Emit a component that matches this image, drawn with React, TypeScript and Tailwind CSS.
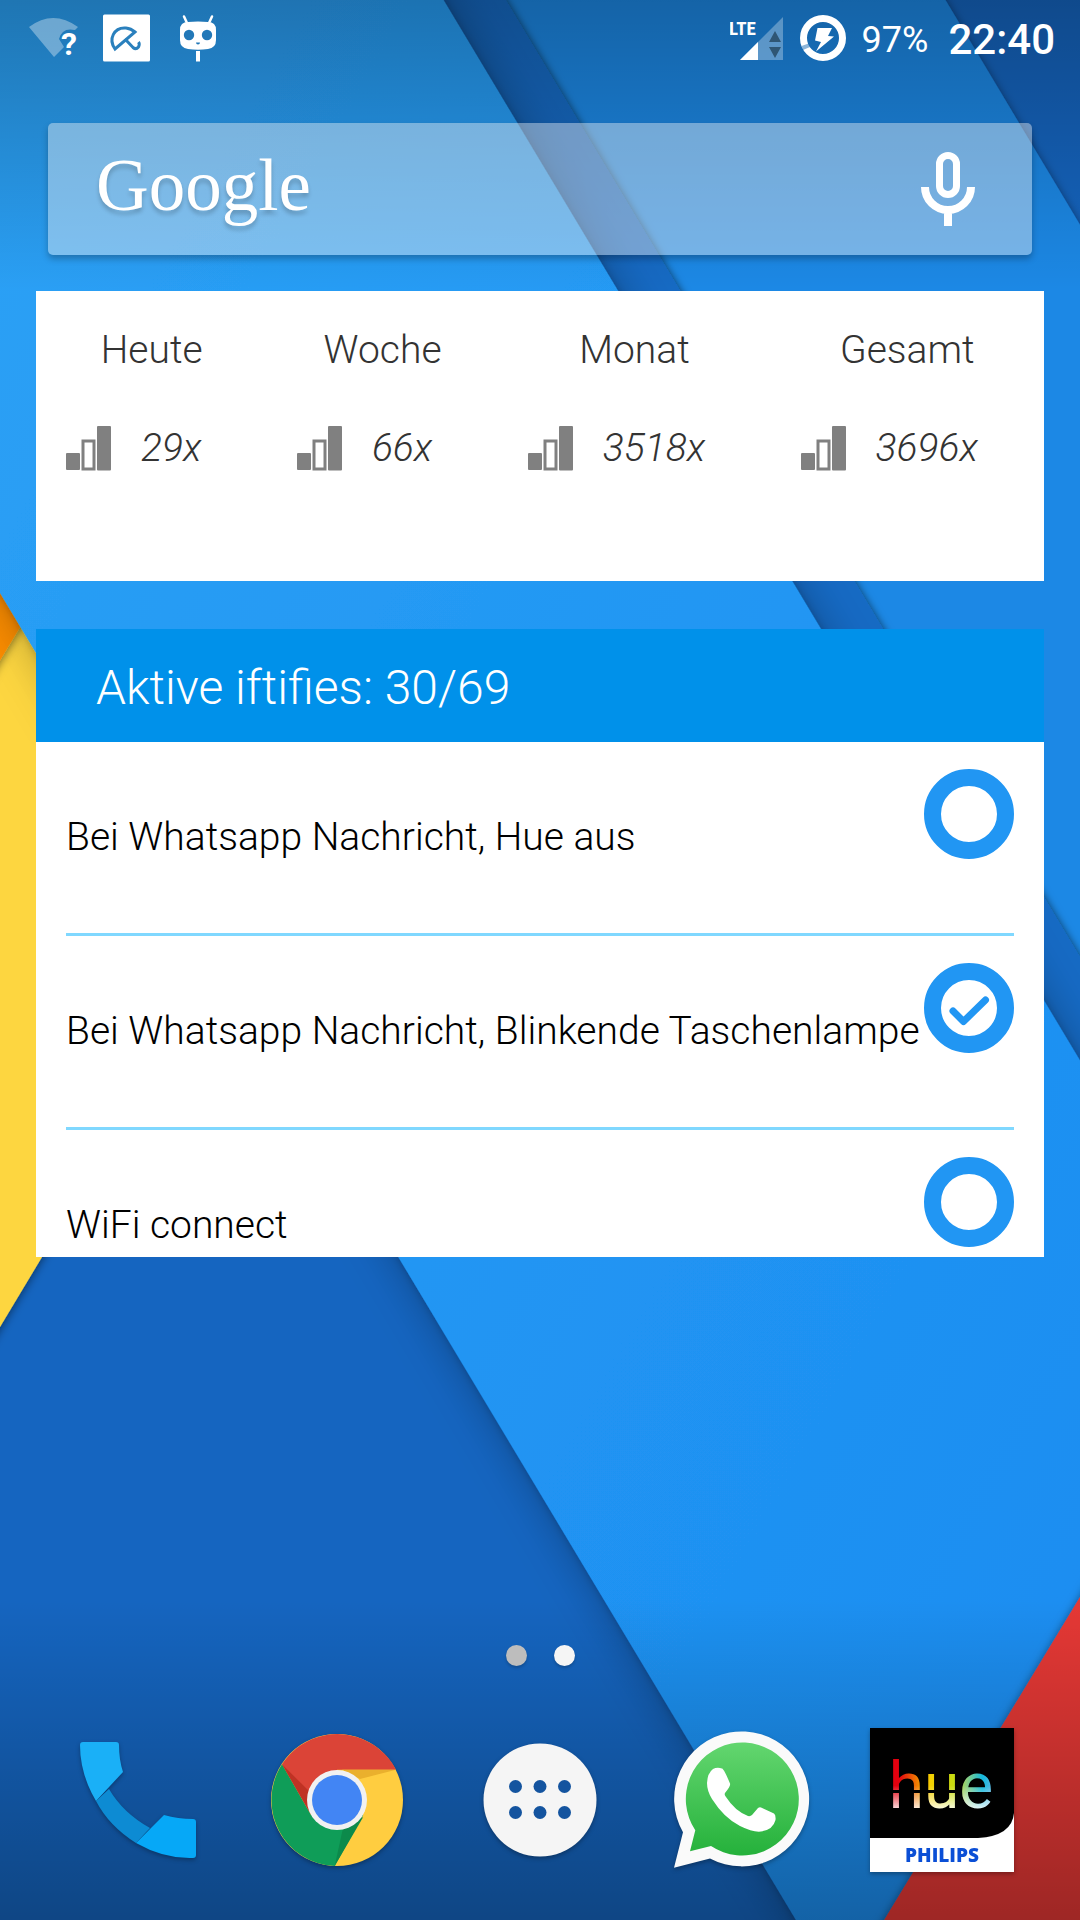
import { useState } from "react";

const stats = [
	{ label: "Heute", value: "29x" },
	{ label: "Woche", value: "66x" },
	{ label: "Monat", value: "3518x" },
	{ label: "Gesamt", value: "3696x" },
];

const initialRules = [
	{ id: "hue", name: "Bei Whatsapp Nachricht, Hue aus", active: false },
	{
		id: "torch",
		name: "Bei Whatsapp Nachricht, Blinkende Taschenlampe",
		active: true,
	},
	{ id: "wifi", name: "WiFi connect", active: false },
];

function Wallpaper() {
	return (
		<svg
			className="absolute inset-0 -z-10 size-full"
			viewBox="0 0 1080 1920"
			preserveAspectRatio="xMidYMid slice"
			aria-hidden="true"
		>
			<defs>
				<linearGradient id="sheet" x1="0" y1="0" x2="1" y2="1">
					<stop offset="0" stopColor="#2da2f5" />
					<stop offset="0.5" stopColor="#2196f3" />
					<stop offset="1" stopColor="#1c8af0" />
				</linearGradient>
				<linearGradient id="scrimTop" x1="0" y1="0" x2="0" y2="1">
					<stop offset="0" stopColor="#000" stopOpacity="0.27" />
					<stop offset="1" stopColor="#000" stopOpacity="0" />
				</linearGradient>
				<linearGradient id="scrimBottom" x1="0" y1="0" x2="0" y2="1">
					<stop offset="0" stopColor="#000" stopOpacity="0" />
					<stop offset="1" stopColor="#000" stopOpacity="0.31" />
				</linearGradient>
				<filter id="soft" x="-20%" y="-20%" width="140%" height="140%">
					<feDropShadow dx="0" dy="2" stdDeviation="5" floodOpacity="0.5" />
				</filter>
				<filter id="tight" x="-20%" y="-20%" width="140%" height="140%">
					<feDropShadow dx="0" dy="0" stdDeviation="4" floodOpacity="0.6" />
				</filter>
				<filter id="deep" x="-20%" y="-20%" width="140%" height="140%">
					<feDropShadow dx="0" dy="0" stdDeviation="24" floodOpacity="0.22" />
					<feDropShadow dx="0" dy="0" stdDeviation="4" floodOpacity="0.25" />
				</filter>
			</defs>
			<rect width="1080" height="1920" fill="#1565c0" />
			<path
				d="M400-76 900-76 1180 392V1200L1080 1060Z"
				fill="#1e88e5"
				filter="url(#soft)"
			/>
			<path
				d="M398-76H460L1180 1124V1227Z"
				fill="#176ac4"
				filter="url(#tight)"
			/>
			<path
				d="M-60 500 200 900 200 994-60 1427Z"
				fill="#fdd63f"
				filter="url(#soft)"
			/>
			<path d="M-60 500 40 594-60 760Z" fill="#fb8c00" filter="url(#soft)" />
			<path
				d="M-60-76H398L1180 1227V2100H904L-60 493Z"
				fill="url(#sheet)"
				filter="url(#deep)"
			/>
			<path
				d="M1180 1432V2100H775Z"
				fill="#e53935"
				filter="url(#soft)"
			/>
			<rect width="1080" height="290" fill="url(#scrimTop)" />
			<rect y="1600" width="1080" height="320" fill="url(#scrimBottom)" />
		</svg>
	);
}

function WifiIcon() {
	return (
		<svg className="h-12 w-[50px]" viewBox="0 0 50 48" aria-hidden="true">
			<path
				d="M0 13Q24-5 49 13L46 16Q33 13 30 25L35 33 25 43Z"
				fill="#fff"
				fillOpacity="0.35"
			/>
			<text
				x="32"
				y="41"
				fill="#fff"
				className="font-['Roboto'] text-[32px] font-bold"
			>
				?
			</text>
		</svg>
	);
}

function UmbrellaIcon() {
	return (
		<svg className="size-12" viewBox="0 0 48 48" aria-hidden="true">
			<rect x="1" y="0.5" width="47" height="47" rx="1.5" fill="#fff" />
			<g fill="none" stroke="#2a80bd" strokeWidth="3">
				<path d="M13 35C6 25 12 13 24 14Q29 14.5 33 18Z" />
				<path d="M23 25 31 33.5Q34 36 36.500 33Q38 30 36.500 28" />
			</g>
		</svg>
	);
}

function DroidIcon() {
	return (
		<svg className="h-12 w-[50px]" viewBox="-7 0 50 48" aria-hidden="true">
			<path
				d="M4 2.5 7 9M32 2.5 29 9"
				stroke="#fff"
				strokeWidth="2.5"
				strokeLinecap="round"
			/>
			<path
				d="M8 8Q18 7 28 8Q36 8 36 16V26Q36 34 28 35Q18 36.5 8 35Q0 34 0 26V16Q0 8 8 8Z"
				fill="#fff"
			/>
			<circle cx="9" cy="21" r="5.2" fill="#2278b8" />
			<circle cx="27" cy="21" r="5.2" fill="#2278b8" />
			<path d="M16 28.5h4a2 2 0 0 1-4 0Z" fill="#2278b8" />
			<path d="M16 37h4v10.5h-4Z" fill="#fff" />
		</svg>
	);
}

function SignalIcon() {
	return (
		<svg className="h-12 w-[54px]" viewBox="0 0 54 48" aria-hidden="true">
			<path d="M10 46 53 46V3Z" fill="#fff" fillOpacity="0.3" />
			<path d="M10 46H28V28Z" fill="#fff" />
			<path d="M45 17 51 28H39ZM39 33H51L45 44Z" fill="#2f5674" />
			<text
				x="-1"
				y="21"
				fill="#fff"
				className="font-['Liberation_Sans_Narrow','Roboto_Condensed','Roboto'] text-[19px] font-bold"
			>
				LTE
			</text>
		</svg>
	);
}

function BatteryIcon() {
	return (
		<svg className="size-[46px]" viewBox="0 0 46 46" aria-hidden="true">
			<circle
				cx="23"
				cy="23"
				r="19.5"
				fill="none"
				stroke="#fff"
				strokeWidth="7"
			/>
			<path
				d="M1.5 31 8.5 28.5 10 32 3 35Z"
				fill="#1a6cb4"
				fillOpacity="0.5"
			/>
			<path d="M17.5 13H32L28 21 34 21.5 16 36.5 21 27 15 25.5Z" fill="#fff" />
		</svg>
	);
}

function StatusBar() {
	return (
		<header className="flex h-[75px] items-center justify-between pr-[25px] pl-[29px] text-white">
			<div className="flex items-center gap-[23px]">
				<WifiIcon />
				<UmbrellaIcon />
				<DroidIcon />
			</div>
			<div className="flex items-center gap-4">
				<SignalIcon />
				<BatteryIcon />
				<div className="flex items-center gap-5 pt-1 leading-[48px]">
					<span className="text-[36px]">97%</span>
					<time className="text-[42px] font-medium">22:40</time>
				</div>
			</div>
		</header>
	);
}

function SearchBar() {
	return (
		<section className="mx-12 mt-12 flex h-[132px] items-center justify-between rounded-[5px] bg-[#f3f3f3]/42 pr-[57px] pl-12 shadow-[0_4px_6px_rgba(0,0,0,0.25)]">
			<button
				type="button"
				className="pb-1.5 font-['Liberation_Serif',serif] text-[73px] leading-[80px] text-white [text-shadow:0_4px_4px_rgba(0,0,0,0.2)]"
			>
				Google
			</button>
			<button type="button" aria-label="Sprachsuche">
				<svg
					className="h-[74px] w-[54px]"
					viewBox="0 0 54 74"
					fill="none"
					stroke="#fff"
					aria-hidden="true"
				>
					<rect
						x="18.5"
						y="3.5"
						width="17"
						height="39"
						rx="8.5"
						strokeWidth="7"
					/>
					<path d="M4 35a23 23 0 0 0 46 0M27 58V74" strokeWidth="8" />
				</svg>
			</button>
		</section>
	);
}

function BarsIcon() {
	return (
		<svg
			className="size-[45px]"
			viewBox="0 0 45 45"
			fill="#808080"
			aria-hidden="true"
		>
			<rect y="27" width="14" height="17" rx="1" />
			<rect
				x="17"
				y="15"
				width="11"
				height="28"
				fill="none"
				stroke="#808080"
				strokeWidth="3"
			/>
			<rect x="31" width="14" height="44.5" rx="1" />
		</svg>
	);
}

function StatsWidget() {
	return (
		<section className="mx-9 mt-9 flex h-[290px] justify-between bg-white px-[30px] pt-[35px] text-[39px] leading-[48px] font-light text-[#333]">
			{stats.map((stat) => (
				<div key={stat.label} className="flex flex-col items-center gap-[50px]">
					<h2>{stat.label}</h2>
					<p className="flex items-center gap-[30px] pr-9 italic">
						<BarsIcon />
						{stat.value}
					</p>
				</div>
			))}
		</section>
	);
}

function RulesWidget() {
	const [rules, setRules] = useState(initialRules);

	const toggle = (id: string) =>
		setRules(
			rules.map((rule) =>
				rule.id === id ? { ...rule, active: !rule.active } : rule,
			),
		);

	return (
		<section className="mx-9 mt-12 bg-white font-light">
			<h2 className="flex h-[113px] items-center bg-[#0091ea] px-[60px] pt-1 text-[48px] leading-[56px] text-white">
				Aktive iftifies: 30/69
			</h2>
			<ul className="h-[515px] overflow-hidden px-[30px]">
				{rules.map((rule) => (
					<li
						key={rule.id}
						className="flex h-[194px] items-center justify-between border-b-3 border-[#80d8ff] text-[39px] leading-[48px] text-black"
					>
						<label htmlFor={rule.id} className="pb-0.5 whitespace-nowrap">
							{rule.name}
						</label>
						<span className="relative mt-[27px] size-[90px] shrink-0 self-start">
							<input
								id={rule.id}
								type="checkbox"
								checked={rule.active}
								onChange={() => toggle(rule.id)}
								className="block size-full appearance-none rounded-full border-[17px] border-[#2196f3]"
							/>
							{rule.active && (
								<svg
									className="pointer-events-none absolute inset-0"
									viewBox="0 0 90 90"
									fill="none"
									stroke="#2196f3"
									strokeWidth="7"
									strokeLinecap="round"
									strokeLinejoin="round"
									aria-hidden="true"
								>
									<path d="M29 48 39.5 58.5 61.5 37" />
								</svg>
							)}
						</span>
					</li>
				))}
			</ul>
		</section>
	);
}

function PhoneIcon() {
	return (
		<svg viewBox="0 0 144 144" aria-hidden="true">
			<path d="M43 61Q57 85 84 100L70 115Q43 98 30 73Z" fill="#0d8bd3" />
			<path
				d="M17 14H50Q53 14 53 17Q53 32 57 44L30 73Q14 46 14 17Q14 14 17 14Z"
				fill="#1ab0f7"
			/>
			<path
				d="M98 87Q112 91 127 91Q130 91 130 94V127Q130 130 127 130Q98 131 70 115Z"
				fill="#06a8f7"
			/>
		</svg>
	);
}

function ChromeIcon() {
	return (
		<svg viewBox="0 0 144 144" aria-hidden="true">
			<circle cx="70" cy="72" r="66" fill="#ffcd40" />
			<path d="M15 36.3A66 66 0 0 1 129 41.7H70L44 87Z" fill="#db4437" />
			<path d="M15 36.3A66 66 0 0 0 67.7 138L96.2 87H44Z" fill="#0f9d58" />
			<path d="M15 36.3 43 64 42 83Z" fill="#bf3224" />
			<path d="M75 41.7H129L93 51Z" fill="#eab02d" />
			<path d="M67.7 138 76 100 96.2 89Z" fill="#0c8a4b" />
			<circle cx="70" cy="72" r="30" fill="#f1f1f1" />
			<circle cx="70" cy="72" r="25" fill="#4285f4" />
		</svg>
	);
}

function AppsIcon() {
	return (
		<svg viewBox="0 0 144 144" aria-hidden="true">
			<circle cx="72" cy="72" r="56.5" fill="#f5f5f5" />
			<g fill="#14549f">
				<circle cx="47.5" cy="58.5" r="6.5" />
				<circle cx="72" cy="58.5" r="6.5" />
				<circle cx="96.5" cy="58.5" r="6.5" />
				<circle cx="47.5" cy="84.5" r="6.5" />
				<circle cx="72" cy="84.5" r="6.5" />
				<circle cx="96.5" cy="84.5" r="6.5" />
			</g>
		</svg>
	);
}

function WhatsappIcon() {
	return (
		<svg viewBox="0 0 144 144" aria-hidden="true">
			<defs>
				<linearGradient id="wa" x1="0" y1="0" x2="0" y2="1">
					<stop offset="0" stopColor="#63d66f" />
					<stop offset="1" stopColor="#25b13b" />
				</linearGradient>
			</defs>
			<path
				d="M5 139.7 14 104.3A67.5 67.5 0 1 1 41 130.5Z"
				fill="#fafafa"
			/>
			<path
				d="M21 123.3 26.3 102.3A56.5 56.5 0 1 1 42 118Z"
				fill="url(#wa)"
			/>
			<path
				d="M44 41Q48 39 53 40.5Q55 41 61 55.5Q62 57.5 56 65Q55 67 57 69Q66 83 79 88Q81.5 88.5 83 87L89 80Q90.5 79 92 79.5L105 85.5Q107 87 106.5 92Q104 102 92 103.5Q84 104.5 71 98Q55 90 43 71Q38 63 38 55Q38.5 45 44 41Z"
				fill="#fff"
			/>
		</svg>
	);
}

function HueIcon() {
	return (
		<svg viewBox="0 0 144 144" aria-hidden="true">
			<defs>
				<linearGradient id="rainbow">
					<stop offset="0.2" stopColor="#e3000f" />
					<stop offset="0.34" stopColor="#f18a00" />
					<stop offset="0.42" stopColor="#f5d000" />
					<stop offset="0.58" stopColor="#c8dc10" />
					<stop offset="0.67" stopColor="#8fcf7d" />
					<stop offset="0.78" stopColor="#12b9dd" />
					<stop offset="0.85" stopColor="#57b4e0" />
				</linearGradient>
				<linearGradient id="glow" x1="0" y1="0" x2="0" y2="1">
					<stop offset="0.4" stopColor="#fff" stopOpacity="0" />
					<stop offset="0.57" stopColor="#fff" stopOpacity="0.9" />
				</linearGradient>
				<pattern
					id="hueFill"
					width="144"
					height="144"
					patternUnits="userSpaceOnUse"
				>
					<rect width="144" height="144" fill="url(#rainbow)" />
					<rect width="144" height="144" fill="url(#glow)" />
				</pattern>
			</defs>
			<rect width="144" height="144" fill="#fff" />
			<path d="M0 0H144V85Q142 108 108 110H0Z" />
			<text
				x="71"
				y="80"
				textAnchor="middle"
				fill="url(#hueFill)"
				className="font-['Roboto'] text-[64px]"
			>
				hue
			</text>
			<rect x="20" y="62" width="68" height="3" />
			<text
				x="72"
				y="134"
				textAnchor="middle"
				fill="#0b4fd6"
				className="font-['Open_Sans'] text-[19px] font-extrabold"
			>
				PHILIPS
			</text>
		</svg>
	);
}

const apps = [
	{ name: "Telefon", Icon: PhoneIcon },
	{ name: "Chrome", Icon: ChromeIcon },
	{ name: "Apps", Icon: AppsIcon },
	{ name: "WhatsApp", Icon: WhatsappIcon },
	{ name: "Philips Hue", Icon: HueIcon },
];

export default function App() {
	return (
		<main className="relative isolate flex min-h-screen flex-col overflow-hidden font-['Roboto',sans-serif]">
			<Wallpaper />
			<StatusBar />
			<SearchBar />
			<StatsWidget />
			<RulesWidget />
			<footer className="mt-auto pt-12 pb-12">
				<div className="flex justify-center gap-[27px]">
					<span className="size-[21px] rounded-full bg-[#bdbdbd] shadow-[0_2px_3px_rgba(0,0,0,0.2)]" />
					<span className="size-[21px] rounded-full bg-[#f5f5f5] shadow-[0_2px_3px_rgba(0,0,0,0.2)]" />
				</div>
				<nav className="mt-[62px] grid grid-cols-5 justify-items-center px-[38px]">
					{apps.map(({ name, Icon }) => (
						<button
							key={name}
							type="button"
							aria-label={name}
							className="size-36 drop-shadow-[0_2px_2px_rgba(0,0,0,0.3)]"
						>
							<Icon />
						</button>
					))}
				</nav>
			</footer>
		</main>
	);
}
